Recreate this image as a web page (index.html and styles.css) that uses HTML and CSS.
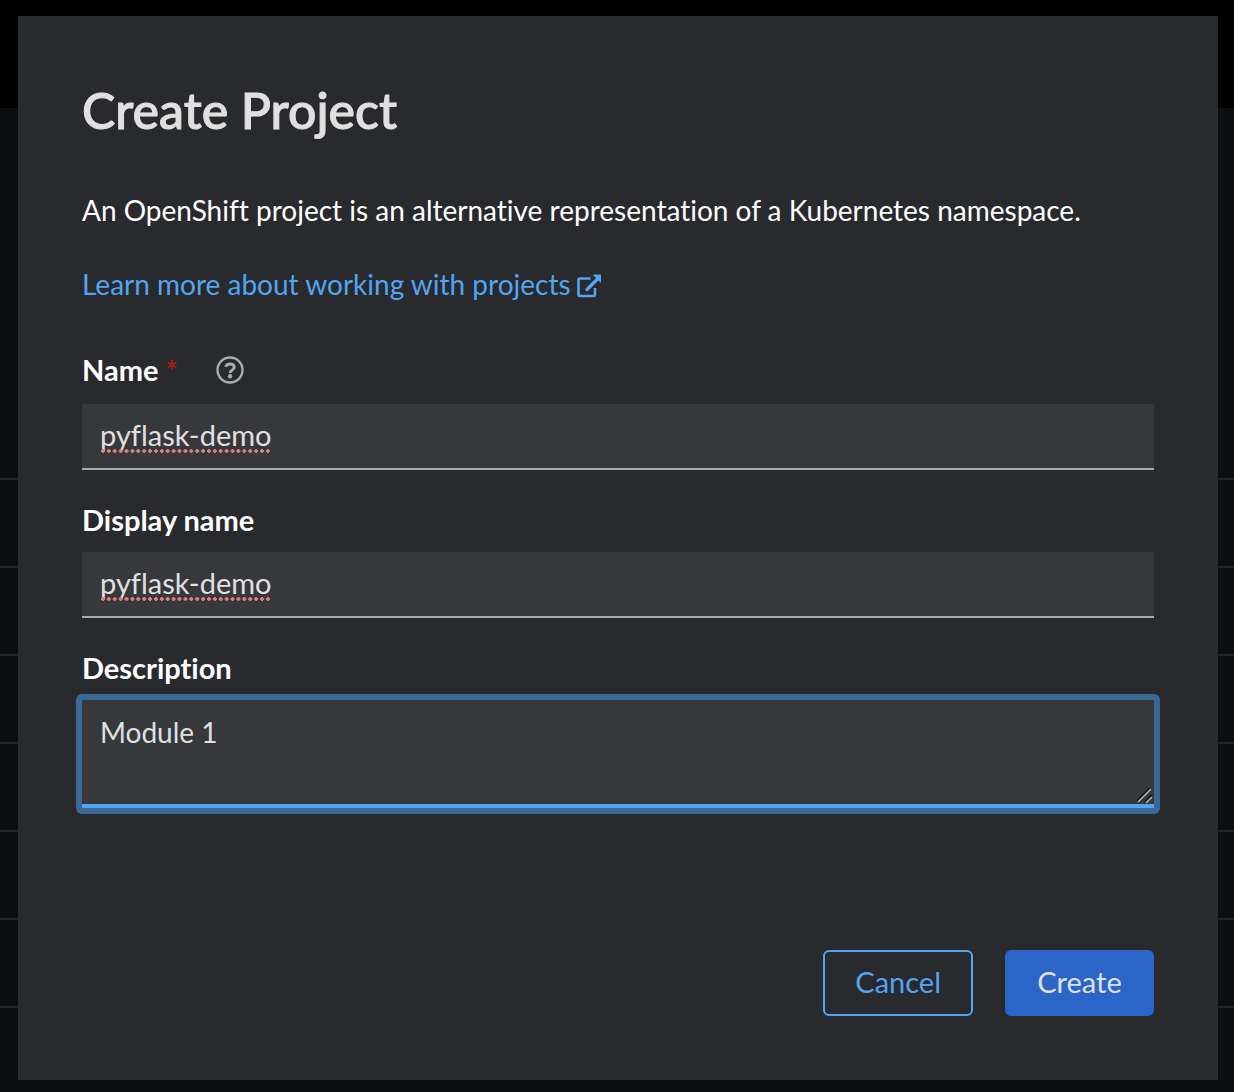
FILE: index.html
```html
<!DOCTYPE html>
<html lang="en">
<head>
<meta charset="utf-8">
<title>Create Project</title>
<meta name="viewport" content="width=device-width, initial-scale=1">
<link rel="stylesheet" href="styles.css">
</head>
<body>
<div class="page">
  <div class="backdrop" aria-hidden="true">
    <div class="masthead"></div>
    <div class="toolbar"></div>
    <div class="row"></div>
    <div class="row"></div>
    <div class="row"></div>
    <div class="row"></div>
    <div class="row"></div>
    <div class="row"></div>
    <div class="row row-last"></div>
  </div>
  <main class="modal" role="dialog" aria-labelledby="modal-title">
    <h1 class="modal-title" id="modal-title">Create Project</h1>
    <p class="intro">An OpenShift project is an alternative representation of a Kubernetes namespace.</p>
    <p class="learn-more">
      <a class="link" href="#">Learn more about working with projects<svg class="link-icon" viewBox="0 0 24 24" aria-hidden="true"><path d="M13.500 4.500H3Q1.500 4.500 1.500 6V20.500Q1.500 22 3 22H16.500Q18 22 18 20.500V14" fill="none" stroke="currentColor" stroke-width="2.600"/><path d="M10 15.500L20 5.500" fill="none" stroke="currentColor" stroke-width="3.400" stroke-linecap="round"/><path d="M16.500 1H24V8.500Z" fill="currentColor" stroke="currentColor" stroke-linejoin="round"/></svg></a>
    </p>
    <form class="form">
      <div class="field">
        <div class="label-row">
          <label class="label" for="name">Name <span class="required">*</span></label>
          <button class="help" type="button" aria-label="Help for name">
            <svg class="help-icon" viewBox="0 0 28 28" aria-hidden="true"><circle cx="14" cy="14" r="12.500" fill="none" stroke="currentColor" stroke-width="2.400"/><path d="M9.600 10.800C10.400 8.800 12 7.900 14 7.900C16.400 7.900 18.200 9.200 18.200 11.200C18.200 14 14.200 13.800 14.200 17" fill="none" stroke="currentColor" stroke-width="3"/><circle cx="14.100" cy="20.300" r="2.200" fill="currentColor"/></svg>
          </button>
        </div>
        <div class="spellcheck">
          <input class="control" id="name" type="text" value="pyflask-demo" spellcheck="false" required>
        </div>
      </div>
      <div class="field">
        <label class="label" for="display-name">Display name</label>
        <div class="spellcheck">
          <input class="control" id="display-name" type="text" value="pyflask-demo" spellcheck="false">
        </div>
      </div>
      <div class="field">
        <label class="label" for="description">Description</label>
        <div class="focus-ring">
          <textarea class="control control-area" id="description" spellcheck="false">Module 1</textarea>
          <svg class="grip" viewBox="0 0 16 16" aria-hidden="true"><path d="M0 13L13 0M8 14L15 7" stroke="#151617" stroke-width="2"/><path d="M1 14L14 1M9 15L15 9" stroke="#b8b8b9" stroke-width="1.500"/></svg>
        </div>
      </div>
      <div class="actions">
        <button class="button button-secondary" type="button">Cancel</button>
        <button class="button button-primary" type="submit">Create</button>
      </div>
    </form>
  </main>
</div>
</body>
</html>
```
FILE: styles.css
```css
* { box-sizing: border-box; }

body {
  margin: 0;
  background: #0c0d0f;
  color: #fff;
  font-family: Lato, "Liberation Sans", sans-serif;
  font-size: 29px;
  font-variant-ligatures: none;
  line-height: 42px;
}

.page { display: grid; min-height: 100vh; }
.backdrop, .modal { grid-area: 1 / 1; }

.backdrop { display: flex; flex-direction: column; }
.masthead { height: 108px; background: #000; }
.toolbar { height: 370px; }
.row { height: 88px; border-top: 2px solid #232426; }
.row-last { flex: 1; height: auto; }

.modal {
  margin: 16px 16px 12px 18px;
  padding: 64px;
  background: #292a2d;
}

.modal-title {
  margin: 0;
  color: #e0e0e0;
  font-size: 50px;
  font-weight: 500;
  line-height: 60px;
  -webkit-text-stroke: 1px #e0e0e0;
}

.intro { margin: 49px 0 0; font-size: 28px; }
.learn-more { margin: 32px 0 0; font-size: 28px; }

.link {
  display: inline-flex;
  align-items: flex-end;
  gap: 6px;
  color: #52a5f2;
  text-decoration: none;
}
.link-icon { width: 24px; height: 24px; margin-bottom: 7px; }

.form {
  display: flex;
  flex-direction: column;
  gap: 29px;
  margin-top: 44px;
}
.field { display: flex; flex-direction: column; gap: 11px; }
.label-row { display: flex; align-items: flex-start; gap: 38px; height: 44px; }
.label { font-weight: 700; }
.required { color: #a31e12; }

.help {
  display: flex;
  align-items: center;
  height: 42px;
  padding: 0;
  border: 0;
  background: none;
  color: #aaabac;
}
.help-icon { width: 28px; height: 28px; }

.control {
  display: block;
  width: 100%;
  height: 66px;
  padding: 9px 18px 12px;
  border: 0;
  border-bottom: 2px solid #aaabac;
  border-radius: 0;
  outline: none;
  background: #37383b;
  color: #e0e0e0;
  font: inherit;
}

/* dotted mark under an unknown word */
.spellcheck { position: relative; }
.spellcheck::after {
  content: "";
  position: absolute;
  left: 18px;
  bottom: 17px;
  width: 171px;
  height: 4px;
  background: radial-gradient(circle, #d97f7f 50%, transparent 60%) 0 0 / 6px 4px round;
  background: radial-gradient(circle closest-side, #d97f7f 80%, transparent 100%) 0 0 / 6px 4px round;
  pointer-events: none;
}

.focus-ring {
  position: relative;
  margin: -6px;
  padding: 6px;
  border-radius: 6px;
  background: #3b6995;
}
.control-area {
  height: 108px;
  padding-top: 11px;
  border-bottom: 4px solid #52a5f2;
  font-size: 28px;
  resize: vertical;
}
.control-area::-webkit-resizer { background: none; }
.grip {
  position: absolute;
  right: 7px;
  bottom: 10px;
  width: 16px;
  height: 16px;
  pointer-events: none;
}

.actions {
  display: flex;
  justify-content: flex-end;
  gap: 32px;
  margin-top: 113px;
}
.button {
  min-width: 149px;
  height: 66px;
  padding: 0 30px 2px;
  border: 2px solid transparent;
  border-radius: 6px;
  font: inherit;
}
.button-secondary { border-color: #52a5f2; background: none; color: #52a5f2; }
.button-primary { border-color: #2b65c7; background: #2b65c7; color: #e0e0e0; }
```
